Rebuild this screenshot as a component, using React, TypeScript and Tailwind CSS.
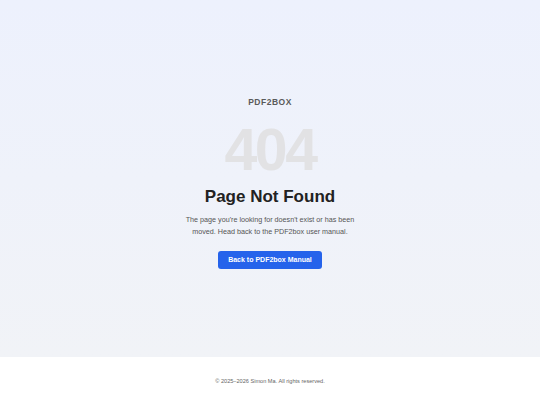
import React from 'react'

// 404 page — PDF2box manual

export default function App() {
  return (
    <div
      className="flex min-h-[405px] w-full flex-col"
      style={{ fontFamily: '"Liberation Sans", Arial, sans-serif' }}
    >
      <main className="flex h-[357px] flex-col items-center justify-center bg-gradient-to-b from-[#edf1fd] to-[#f1f3f7] pt-[8px] text-center">
        <div className="text-[8.5px] font-bold tracking-[0.06em] text-[#5a5a5a]">PDF2BOX</div>
        <div className="mt-[12px] text-[59px] font-bold leading-none tracking-[-2.5px] text-[#e2e2e4]">404</div>
        <h1 className="mt-[6px] text-[17px] font-bold leading-tight text-[#222]">Page Not Found</h1>
        <p className="mt-[7px] w-[180px] text-[7.2px] leading-[12px] text-[#555]">
          The page you&apos;re looking for doesn&apos;t exist or has been moved. Head back to the PDF2box user manual.
        </p>
        <a
          href="#"
          className="mt-[13px] flex h-[18px] w-[104px] items-center justify-center rounded-[3px] bg-[#2563eb] text-[7px] font-bold text-white"
        >
          Back to PDF2box Manual
        </a>
      </main>
      <footer className="flex h-[48px] items-center justify-center bg-white">
        <span className="text-[5.6px] text-[#666]">© 2025–2026 Simon Ma. All rights reserved.</span>
      </footer>
    </div>
  )
}
